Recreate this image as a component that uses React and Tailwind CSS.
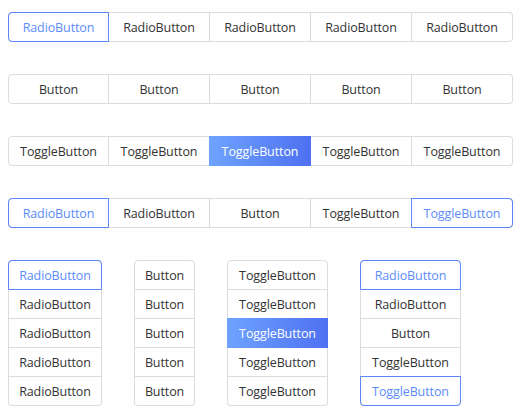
import React from "react";

const font = { fontFamily: '"Open Sans", "Noto Sans CJK SC", sans-serif' };

function HItem({ label, state, first, last }) {
  const rounded = first ? "rounded-l-[4px]" : last ? "rounded-r-[4px]" : "";
  return (
    <div
      className={`relative h-[30px] flex items-center justify-center border-y border-r border-[#dcdcdc] ${first ? "border-l" : ""} ${rounded} text-[12.5px] tracking-[-0.1px] ${state === "sel" ? "text-[#5b8cfb]" : state === "on" ? "text-white" : "text-[#333333]"}`}
    >
      {state === "sel" && (
        <span className={`absolute -inset-px border border-[#5b84f6] ${rounded}`} />
      )}
      {state === "on" && (
        <span className={`absolute -inset-px bg-linear-to-r from-[#6fa3ff] to-[#4f70f1] ${rounded}`} />
      )}
      <span className="relative pt-[2px]">{label}</span>
    </div>
  );
}

function HRow({ items }) {
  return (
    <div className="grid grid-cols-5 w-[505px]">
      {items.map((it, i) => (
        <HItem key={i} label={it[0]} state={it[1]} first={i === 0} last={i === items.length - 1} />
      ))}
    </div>
  );
}

function VItem({ label, state, first, last }) {
  const rounded = first ? "rounded-t-[4px]" : last ? "rounded-b-[4px]" : "";
  return (
    <div
      className={`relative h-[29px] flex items-center justify-center border-x border-b border-[#dcdcdc] ${first ? "border-t h-[30px]" : ""} ${rounded} text-[12.5px] tracking-[-0.1px] ${state === "sel" ? "text-[#5b8cfb]" : state === "on" ? "text-white" : "text-[#333333]"}`}
    >
      {state === "sel" && (
        <span className={`absolute -inset-px border border-[#5b84f6] ${rounded}`} />
      )}
      {state === "on" && (
        <span className={`absolute -inset-px bg-linear-to-r from-[#6fa3ff] to-[#4f70f1] ${rounded}`} />
      )}
      <span className="relative pt-[2px]">{label}</span>
    </div>
  );
}

function VCol({ items, w }) {
  return (
    <div className={`flex flex-col ${w}`}>
      {items.map((it, i) => (
        <VItem key={i} label={it[0]} state={it[1]} first={i === 0} last={i === items.length - 1} />
      ))}
    </div>
  );
}

export default function App() {
  const R = "RadioButton", B = "Button", T = "ToggleButton";
  return (
    <div className="w-[521px] h-[413px] bg-white pl-[8px] pt-[12px] flex flex-col gap-[32px]" style={font}>
      <HRow items={[[R, "sel"], [R], [R], [R], [R]]} />
      <HRow items={[[B], [B], [B], [B], [B]]} />
      <HRow items={[[T], [T], [T, "on"], [T], [T]]} />
      <HRow items={[[R, "sel"], [R], [B], [T], [T, "sel"]]} />
      <div className="flex gap-[32px] items-start">
        <VCol w="w-[94px]" items={[[R, "sel"], [R], [R], [R], [R]]} />
        <VCol w="w-[61px]" items={[[B], [B], [B], [B], [B]]} />
        <VCol w="w-[101px]" items={[[T], [T], [T, "on"], [T], [T]]} />
        <VCol w="w-[101px]" items={[[R, "sel"], [R], [B], [T], [T, "sel"]]} />
      </div>
    </div>
  );
}
